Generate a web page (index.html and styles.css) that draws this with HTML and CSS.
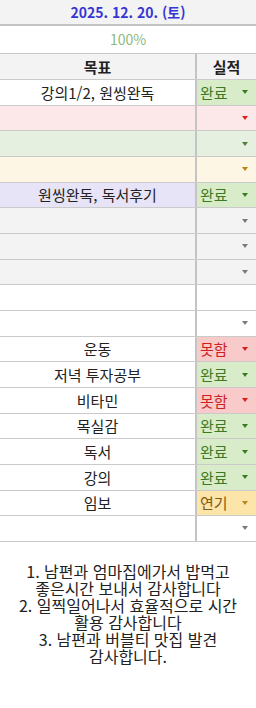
FILE: index.html
```html
<!DOCTYPE html>
<html lang="ko">
<head>
<meta charset="utf-8">
<link rel="stylesheet" href="styles.css">
</head>
<body>
<div class="sheet">
  <div class="date">2025. 12. 20. (토)</div>
  <div class="pct">100%</div>
  <div class="table">
    <div class="row head"><div class="goal">목표</div><div class="res">실적</div></div>
    <div class="row"><div class="goal">강의1/2, 원씽완독</div><div class="res done">완료<span class="arr"></span></div></div>
    <div class="row pink"><div class="goal"></div><div class="res"><span class="arr red"></span></div></div>
    <div class="row green"><div class="goal"></div><div class="res"><span class="arr grn"></span></div></div>
    <div class="row yellow"><div class="goal"></div><div class="res"><span class="arr org"></span></div></div>
    <div class="row purple"><div class="goal">원씽완독, 독서후기</div><div class="res done">완료<span class="arr"></span></div></div>
    <div class="row gray"><div class="goal"></div><div class="res"><span class="arr gry"></span></div></div>
    <div class="row gray"><div class="goal"></div><div class="res"><span class="arr gry"></span></div></div>
    <div class="row gray"><div class="goal"></div><div class="res"><span class="arr gry"></span></div></div>
    <div class="row"><div class="goal"></div><div class="res"></div></div>
    <div class="row"><div class="goal"></div><div class="res"><span class="arr gry"></span></div></div>
    <div class="row"><div class="goal">운동</div><div class="res fail">못함<span class="arr"></span></div></div>
    <div class="row"><div class="goal">저녁 투자공부</div><div class="res done">완료<span class="arr"></span></div></div>
    <div class="row"><div class="goal">비타민</div><div class="res fail">못함<span class="arr"></span></div></div>
    <div class="row"><div class="goal">목실감</div><div class="res done">완료<span class="arr"></span></div></div>
    <div class="row"><div class="goal">독서</div><div class="res done">완료<span class="arr"></span></div></div>
    <div class="row"><div class="goal">강의</div><div class="res done">완료<span class="arr"></span></div></div>
    <div class="row"><div class="goal">임보</div><div class="res delay">연기<span class="arr"></span></div></div>
    <div class="row"><div class="goal"></div><div class="res"><span class="arr gry"></span></div></div>
  </div>
  <div class="note">
    <div>1. 남편과 엄마집에가서 밥먹고</div>
    <div>좋은시간 보내서 감사합니다</div>
    <div>2. 일찍일어나서 효율적으로 시간</div>
    <div>활용 감사합니다</div>
    <div>3. 남편과 버블티 맛집 발견</div>
    <div>감사합니다.</div>
  </div>
</div>
</body>
</html>
```

FILE: styles.css
```css
html, body {
  margin: 0;
  padding: 0;
  background: #ffffff;
}
body {
  font-family: "Noto Sans CJK KR", "Noto Sans", sans-serif;
  font-size: 15px;
  color: #222222;
}
.sheet {
  width: 256px;
}
.date {
  height: 24px;
  line-height: 24px;
  background: #f3f3f3;
  border-bottom: 2px solid #c4c4c4;
  text-align: center;
  font-weight: bold;
  color: #3636d4;
  font-size: 14px;
}
.pct {
  height: 27px;
  line-height: 27px;
  text-align: center;
  color: #8fb97c;
  font-size: 14px;
  border-bottom: 1px solid #c8c8c8;
}
.row {
  display: grid;
  grid-template-columns: 197px 1fr;
  height: 24.67px;
  border-bottom: 1px solid #cacaca;
  line-height: 1;
}
.row.head {
  height: 25px;
  background: #f3f3f3;
  font-weight: bold;
}
.goal {
  border-right: 2px solid #c4c4c4;
  display: flex;
  align-items: center;
  justify-content: center;
  color: #222222;
}
.head .res {
  display: flex;
  align-items: center;
  justify-content: center;
  padding: 0;
  color: #222222;
}
.res {
  display: flex;
  align-items: center;
  justify-content: space-between;
  padding: 0 8px 0 3px;
}
.res:empty {
  padding: 0;
}
.res .arr:only-child {
  margin-left: auto;
}
.arr {
  width: 0;
  height: 0;
  border-left: 3.5px solid transparent;
  border-right: 3.5px solid transparent;
  border-top: 4px solid #7a7a7a;
}
.arr.red { border-top-color: #e02020; }
.arr.grn { border-top-color: #4e7e3a; }
.arr.org { border-top-color: #b8860b; }
.arr.gry { border-top-color: #7a7a7a; }

.pink { background: #fde8e9; }
.green { background: #e6f0e0; }
.yellow { background: #fef6e4; }
.purple .goal { background: #e7e4f7; }
.gray { background: #f3f3f3; }

.done { background: #d8ecca; color: #3b7a24; }
.done .arr { border-top-color: #3b7a24; }
.fail { background: #f9caca; color: #cc1f1f; }
.fail .arr { border-top-color: #dd1c1c; }
.delay { background: #fde4a8; color: #7d5b14; }
.delay .arr { border-top-color: #b78a1e; }

.note {
  padding-top: 21px;
  text-align: center;
  line-height: 17px;
  font-size: 16px;
  color: #222222;
}
```
